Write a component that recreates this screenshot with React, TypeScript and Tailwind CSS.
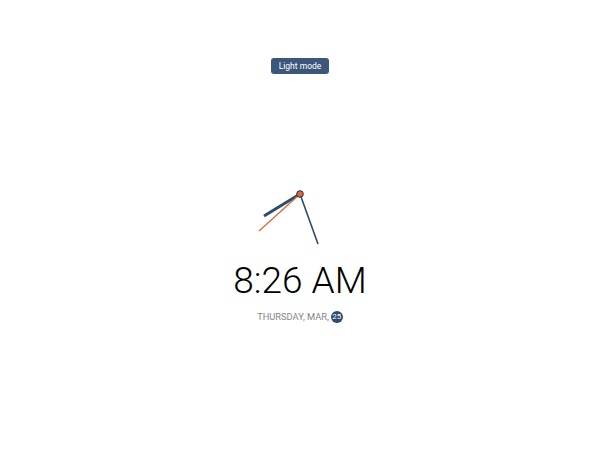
export default function App() {
  const cx = 60;
  const cy = 60;

  return (
    <main className="flex min-h-screen w-full flex-col items-center bg-white pt-[58px] font-['Roboto',sans-serif]">
      <button className="flex h-4 w-[58px] items-center justify-center rounded-[3px] bg-[#3b5779] text-[8.5px] text-white">
        Light mode
      </button>

      <div className="mt-[60px] h-[120px] w-[120px]">
        <svg width="120" height="120" viewBox="0 0 120 120">
          {/* hora */}
          <line
            x1={cx}
            y1={cy}
            x2={cx - 36}
            y2={cy + 22}
            stroke="#2f4b6e"
            strokeWidth="3"
          />
          {/* minutos */}
          <line
            x1={cx}
            y1={cy}
            x2={cx + 18}
            y2={cy + 50}
            stroke="#2f4b6e"
            strokeWidth="1.6"
          />
          {/* segundos */}
          <line
            x1={cx}
            y1={cy}
            x2={cx - 41}
            y2={cy + 37}
            stroke="#d8683f"
            strokeWidth="1.3"
          />
          <circle cx={cx} cy={cy} r="3.3" fill="#d8683f" stroke="#3a2a2a" strokeWidth="1" />
        </svg>
      </div>

      <p className="mt-[6px] text-[37px] leading-[42px] font-light text-black">
        8:26 AM
      </p>

      <div className="mt-[8px] flex items-center gap-[2px] text-[9.3px] text-[#858585] uppercase">
        <span>Thursday, Mar,</span>
        <span className="flex h-[12px] w-[12px] items-center justify-center rounded-full bg-[#2f4b6e] text-[8px] text-white">
          25
        </span>
      </div>
    </main>
  );
}
